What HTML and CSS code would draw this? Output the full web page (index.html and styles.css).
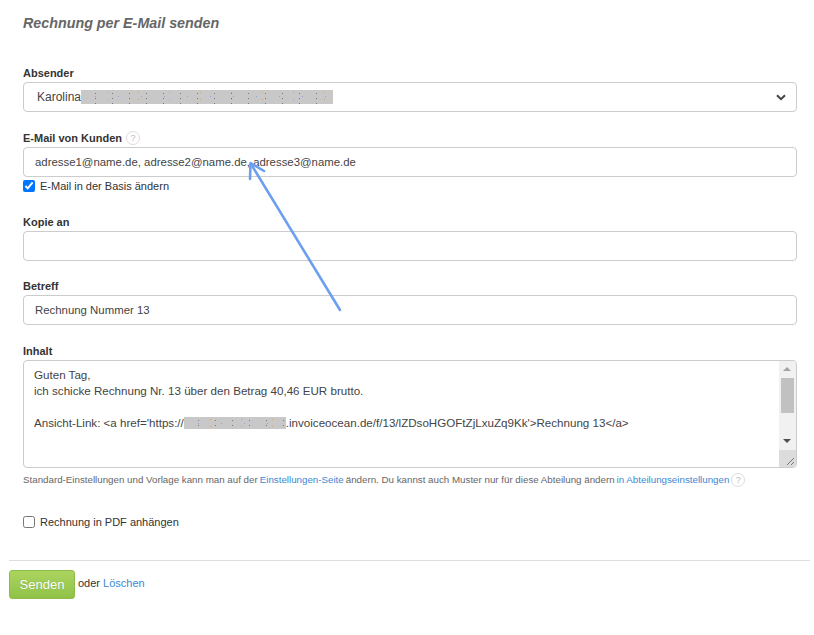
FILE: index.html
```html
<!DOCTYPE html>
<html lang="de">
<head>
<meta charset="utf-8">
<title>Rechnung per E-Mail senden</title>
<link rel="stylesheet" href="styles.css">
</head>
<body>
<div class="page">
  <div class="form">
    <h1 class="title">Rechnung per E-Mail senden</h1>

    <div class="field">
      <label class="label">Absender</label>
      <div class="select">
        <span class="value">Karolina<span class="blur blur-name"></span></span>
        <svg class="chev" width="10" height="7" viewBox="0 0 10 7"><path d="M1 1.2 L5 5.2 L9 1.2" fill="none" stroke="#444" stroke-width="2"/></svg>
      </div>
    </div>

    <div class="field field-email">
      <label class="label">E-Mail von Kunden <span class="help">?</span></label>
      <div class="input">adresse1@name.de, adresse2@name.de, adresse3@name.de</div>
      <label class="check"><input type="checkbox" checked> E-Mail in der Basis ändern</label>
    </div>

    <div class="field">
      <label class="label">Kopie an</label>
      <div class="input"></div>
    </div>

    <div class="field">
      <label class="label">Betreff</label>
      <div class="input">Rechnung Nummer 13</div>
    </div>

    <div class="field field-body">
      <label class="label">Inhalt</label>
      <div class="textarea">
        <div class="ta-text">
          <div>Guten Tag,</div>
          <div>ich schicke Rechnung Nr. 13 über den Betrag 40,46 EUR brutto.</div>
          <div>&nbsp;</div>
          <div>Ansicht-Link: &lt;a href='https://<span class="blur blur-url"></span>.invoiceocean.de/f/13/lZDsoHGOFtZjLxuZq9Kk'&gt;Rechnung 13&lt;/a&gt;</div>
        </div>
        <div class="scrollbar">
          <div class="sb-up"></div>
          <div class="sb-thumb"></div>
          <div class="sb-space"></div>
          <div class="sb-down"></div>
          <div class="sb-corner">
            <svg width="8" height="8" viewBox="0 0 8 8"><path d="M1 8 L8 1 M5 8 L8 5" stroke="#777" stroke-width="1"/></svg>
          </div>
        </div>
      </div>
      <p class="hint">Standard-Einstellungen und Vorlage kann man auf der <a href="#">Einstellungen-Seite</a> ändern. Du kannst auch Muster nur für diese Abteilung ändern <a href="#">in Abteilungseinstellungen</a> <span class="help">?</span></p>
    </div>

    <label class="check check-pdf"><input type="checkbox"> Rechnung in PDF anhängen</label>
  </div>

  <div class="actions">
    <button class="btn">Senden</button>
    <span class="or">oder <a href="#">Löschen</a></span>
  </div>

  <svg class="arrow" width="814" height="635" viewBox="0 0 814 635">
    <path d="M340 310 L251 164" stroke="#6d9ff0" stroke-width="2.6" fill="none" stroke-linecap="round"/>
    <path d="M250 179 L250.5 163 L264 171" stroke="#6d9ff0" stroke-width="2.6" fill="none" stroke-linecap="round" stroke-linejoin="round"/>
  </svg>
</div>
</body>
</html>
```

FILE: styles.css
```css
* { box-sizing: border-box; }

html, body {
  margin: 0;
  padding: 0;
  background: #fff;
}

body {
  font-family: "Liberation Sans", Arial, sans-serif;
  color: #333;
}

.page {
  position: relative;
  width: 814px;
  height: 635px;
  padding: 0 4px 0 9px;
}

.form {
  padding: 0 13px 0 14px;
}

.title {
  margin: 0;
  padding-top: 15px;
  height: 66px;
  font-size: 14.3px;
  line-height: 17px;
  font-style: italic;
  font-weight: bold;
  color: #666;
}

.field {
  margin-bottom: 18.5px;
}

.label {
  display: flex;
  align-items: center;
  gap: 4px;
  height: 14px;
  margin-bottom: 2px;
  font-size: 11px;
  font-weight: bold;
  color: #333;
}

.help {
  display: inline-flex;
  align-items: center;
  justify-content: center;
  width: 14px;
  height: 14px;
  border: 1px solid #ddd;
  border-radius: 50%;
  font-size: 9px;
  font-weight: normal;
  color: #bbb;
  vertical-align: middle;
}

.select,
.input {
  display: flex;
  align-items: center;
  height: 30px;
  border: 1px solid #ccc;
  border-radius: 4px;
  background: #fff;
  font-size: 11.4px;
  color: #444;
}

.select {
  justify-content: space-between;
  padding: 0 10px 0 13px;
  font-size: 12px;
}

.value {
  display: flex;
  align-items: center;
}

.input {
  padding: 0 11px;
}

.blur {
  display: inline-block;
  height: 13px;
  background-color: #c8c8c8;
  background-image:
    radial-gradient(circle, #8aa6d9 0.8px, transparent 1px),
    radial-gradient(circle, #d9a36a 0.8px, transparent 1px),
    radial-gradient(circle, #777 0.7px, transparent 1px);
  background-size: 23px 9px, 31px 7px, 17px 5px;
  background-position: 3px 2px, 11px 6px, 6px 1px;
  vertical-align: middle;
}

.blur-name {
  width: 252px;
  height: 14px;
}

.blur-url {
  width: 102px;
  height: 12px;
}

.chev {
  display: block;
}

.field-email {
  margin-bottom: 0;
}

.check {
  display: flex;
  align-items: center;
  gap: 5px;
  height: 20px;
  font-size: 11px;
  color: #333;
}

.check input {
  margin: 0;
  width: 12px;
  height: 12px;
  accent-color: #0075ff;
}

.field-email .check {
  margin-top: -1px;
  height: 20px;
  margin-bottom: 19px;
}

.textarea {
  display: flex;
  height: 108px;
  border: 1px solid #ccc;
  border-radius: 4px;
  overflow: hidden;
  font-size: 11.6px;
  color: #444;
}

.ta-text {
  flex: 1;
  padding: 6px 10px;
  line-height: 16px;
  white-space: nowrap;
  overflow: hidden;
}

.scrollbar {
  display: flex;
  flex-direction: column;
  width: 17px;
  background: #f1f1f1;
}

.sb-up,
.sb-down {
  height: 17px;
  position: relative;
}

.sb-up::after,
.sb-down::after {
  content: "";
  position: absolute;
  left: 4px;
  top: 6px;
  border-left: 4px solid transparent;
  border-right: 4px solid transparent;
}

.sb-up::after {
  border-bottom: 4px solid #a3a3a3;
}

.sb-down::after {
  border-top: 4px solid #505050;
}

.sb-thumb {
  height: 35px;
  margin: 0 2px;
  background: #c1c1c1;
}

.sb-space {
  flex: 1;
}

.sb-corner {
  height: 17px;
  background: #dcdcdc;
  display: flex;
  align-items: flex-end;
  justify-content: flex-end;
  padding: 0 2px 2px 0;
}

.sb-corner svg {
  display: block;
}

.hint {
  display: flex;
  align-items: center;
  gap: 3px;
  margin: 5px 0 0;
  font-size: 9.75px;
  color: #666;
  white-space: nowrap;
}

.hint a {
  margin: 0 -1px;
}

.field-body {
  margin-bottom: 25px;
}

a {
  color: #3d87d2;
  text-decoration: none;
}

.check-pdf {
  height: 20px;
}

.check-pdf input {
  accent-color: #333;
}

.actions {
  margin-top: 28px;
  border-top: 1px solid #ddd;
  padding-top: 9px;
  display: flex;
  align-items: center;
  gap: 3px;
}

.btn {
  width: 66px;
  height: 29px;
  border: 1px solid #8fbb4c;
  border-radius: 3px;
  background: linear-gradient(#abd45e, #90c248);
  color: #fff;
  font-family: "Liberation Sans", Arial, sans-serif;
  font-size: 13px;
  text-shadow: 0 0 1px rgba(0,0,0,0.2);
  padding: 0;
}

.or {
  font-size: 11px;
  color: #333;
  margin-top: -2px;
}

.arrow {
  position: absolute;
  left: 0;
  top: 0;
  pointer-events: none;
}
```
